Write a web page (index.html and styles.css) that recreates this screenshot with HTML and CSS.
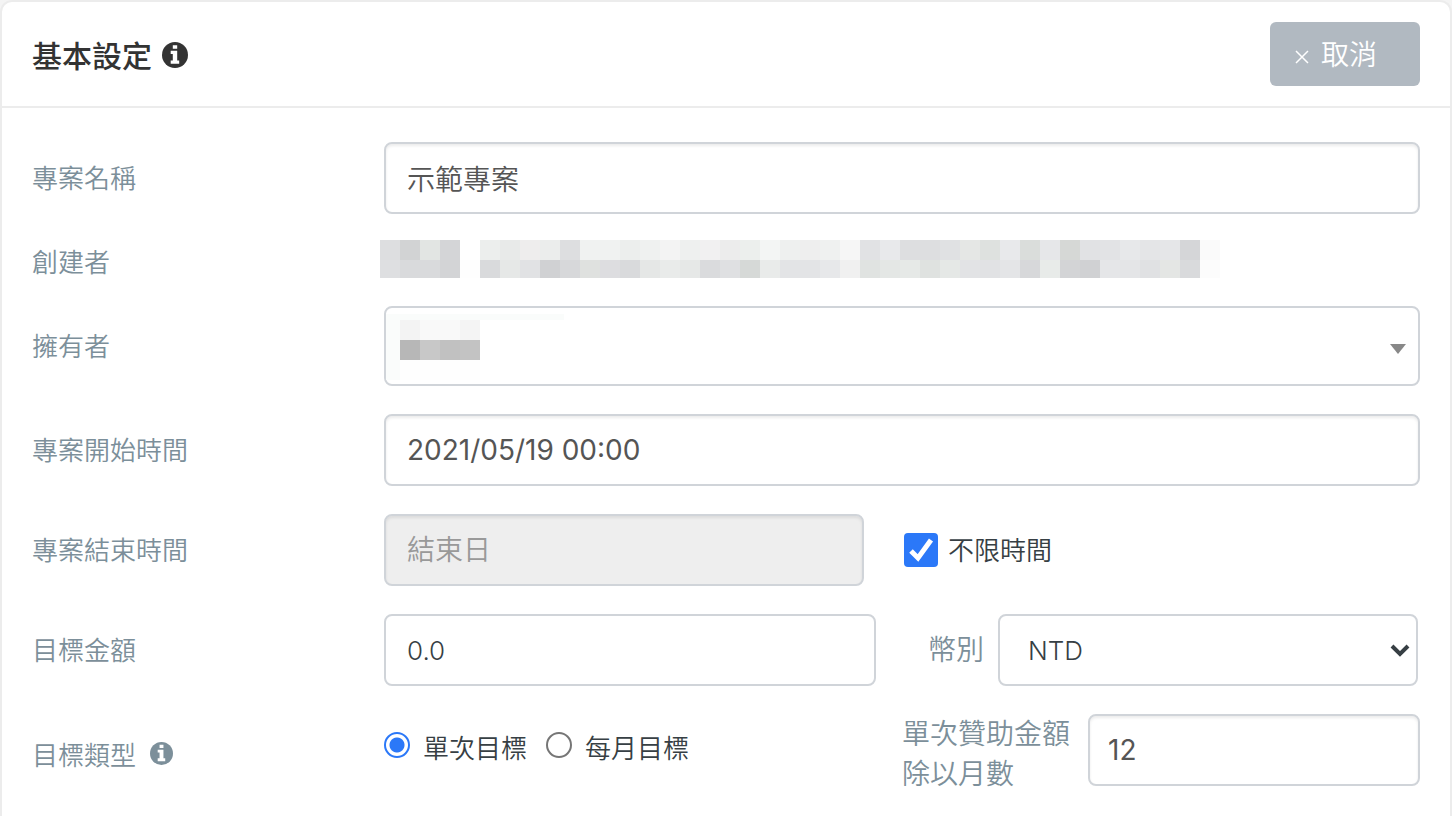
FILE: index.html
```html
<!DOCTYPE html>
<html lang="zh-Hant">
<head>
  <meta charset="UTF-8" />
  <meta name="viewport" content="width=device-width, initial-scale=1.0"/>
  <title>基本設定</title>
  <link rel="stylesheet" href="styles.css">
</head>
<body>

  <form class="panel">

    <!-- Panel heading -->
    <header class="panel-heading">
      <h1><span>基本設定</span>
        <svg class="icon-info" viewBox="0 0 26 26" aria-hidden="true">
          <circle cx="13" cy="13" r="13"/>
          <path fill="#fff" d="M10.8 3.2h4.4v3.6h-4.4zM8.7 8.7h6.5v9.8h2v3.2H8.7v-3.2h2.1v-6.6H8.7z"/>
        </svg>
      </h1>
      <button type="button" class="btn-cancel">
        <svg viewBox="0 0 14 14" aria-hidden="true"><path d="M1 1l12 12M13 1L1 13"/></svg>
        <span>取消</span>
      </button>
    </header>

    <!-- Form rows -->
    <div class="panel-body">
      <div class="row">
        <label for="name">專案名稱</label>
        <input class="field" type="text" id="name" value="示範專案">
      </div>

      <div class="row row-creator">
        <span class="row-label">創建者</span>
        <svg class="mosaic" id="creator" width="840" height="38" aria-hidden="true"></svg>
      </div>

      <div class="row">
        <label for="owner">擁有者</label>
        <div class="owner">
          <select class="field" id="owner"><option value="1" selected></option></select>
          <svg class="owner-mask" id="ownerMask" width="178" height="66" aria-hidden="true"></svg>
        </div>
      </div>

      <div class="row">
        <label for="start">專案開始時間</label>
        <input class="field number" type="text" id="start" value="2021/05/19 00:00">
      </div>

      <div class="row">
        <label for="end">專案結束時間</label>
        <div class="split">
          <input class="field" type="text" id="end" placeholder="結束日" disabled>
          <label class="check"><input type="checkbox" checked><span>不限時間</span></label>
        </div>
      </div>

      <div class="row">
        <label for="amount">目標金額</label>
        <div class="money">
          <input class="field plain" type="text" id="amount" value="0.0">
          <label class="side-label" for="currency">幣別</label>
          <select class="field plain" id="currency"><option>NTD</option></select>
        </div>
      </div>

      <div class="row">
        <span class="row-label label-type"><span>目標類型</span>
          <svg class="icon-info" viewBox="0 0 26 26" aria-hidden="true">
            <circle cx="13" cy="13" r="13"/>
            <path fill="#fff" d="M10.8 3.2h4.4v3.6h-4.4zM8.7 8.7h6.5v9.8h2v3.2H8.7v-3.2h2.1v-6.6H8.7z"/>
          </svg>
        </span>
        <div class="split">
          <div class="radios">
            <label><input type="radio" name="type" checked><span>單次目標</span></label>
            <label><input type="radio" name="type"><span>每月目標</span></label>
          </div>
          <div class="months">
            <label class="side-label" for="months">單次贊助金額除以月數</label>
            <input class="field number" type="text" id="months" value="12">
          </div>
        </div>
      </div>
    </div>

  </form>

  <script>
    // masked personal data, one colour per 20px block
    const creatorRows = [
      "dddee0 d2d3d4 e2e5e3 d4d5d7 fff eceeed e8eae9 eeeded ebedec dddee0 f0f2f1 f0f2f1 eceeed eff1f0 f3f3f3 eef0ef f1f0f1 ececec ecefed f3f5f4 eef0ef eeeeee eff1f0 f6f6f6 e1e2e4 e8e9eb dddee0 dddee0 e0e1e3 e5e7e5 dee1df e8e9eb dadddb e6e7e9 d6d8d6 e1e2e4 e2e3e5 e7e8ea e4e5e7 e5e6e8 d5d6d8 fafafa",
      "dedfe1 d9dadc d9dadc d3d4d6 fefefe d9dadc e6e8e7 e1e2e4 d0d1d3 d7d8da dfe1df dddde0 d9dadc e5e7e6 e9ebea e6e8e7 dadbdd dfe0e2 d6d9d7 e9ebea e3e4e6 e3e4e6 e7e8ea f0f0f0 e0e3e1 e4e7e5 e6e9e7 dfe2e0 e5e8e6 e2e3e5 e1e2e4 e4e5e7 d7d8da e8ebe9 d3d4d6 d0d1d3 e5e6e8 e4e5e7 e0e1e3 e4e6e4 d9dadc fcfcfc"
    ];
    const ownerRows = [
      "f3f3f3 f9f9f9 f9f9f9 f4f4f4",
      "b7b7b7 c8c8c8 c1c1c1 c3c3c3",
      "fefefe fefefe fefefe fefefe"
    ];

    function drawBlocks(id, rows, left, top) {
      let out = "";
      rows.forEach((row, y) => {
        row.split(" ").forEach((color, x) => {
          out += `<rect x="${left + x * 20}" y="${top + y * 20}" width="20" height="20" fill="#${color}"/>`;
        });
      });
      document.getElementById(id).innerHTML += out;
    }

    document.getElementById("ownerMask").innerHTML =
      '<path fill="#fafcfb" d="M0 0h178v6H14v60H0z"/>';
    drawBlocks("creator", creatorRows, 0, 0);
    drawBlocks("ownerMask", ownerRows, 14, 6);
  </script>

</body>
</html>
```

FILE: styles.css
```css
* {
  box-sizing: border-box;
}

body {
  font-family: Inter, "Noto Sans CJK TC", sans-serif;
  font-size: 26px;
  font-weight: 350;
  background-color: #f4f4f4;
  margin: 0;
  color: #373f44;
}

.panel {
  min-height: 100vh;
  background-color: #fff;
  border: 2px solid #ececec;
  border-bottom: 0;
  border-radius: 12px 12px 0 0;
}

.panel-heading {
  display: flex;
  align-items: center;
  justify-content: space-between;
  height: 106px;
  padding: 0 30px;
  border-bottom: 2px solid #ececec;
}

.panel-heading h1 {
  display: flex;
  align-items: center;
  gap: 10px;
  margin: 0;
  padding-top: 2px;
  font-size: 30px;
  font-weight: 500;
  color: #333;
}

/* the CJK glyphs sit low in their line box */
h1 span,
.btn-cancel span,
.check span,
.row > label,
.row-label {
  padding-bottom: 3px;
}

.icon-info {
  width: 26px;
  height: 26px;
  fill: currentColor;
}

.btn-cancel {
  display: flex;
  align-items: center;
  gap: 12px;
  width: 150px;
  height: 64px;
  padding: 0 0 0 25px;
  border: none;
  border-radius: 6px;
  background-color: #b1b9c1;
  color: #fff;
  font: inherit;
  font-size: 28px;
  cursor: pointer;
}

.btn-cancel svg {
  width: 14px;
  height: 14px;
  margin-top: 6px;
  fill: none;
  stroke: #fff;
  stroke-width: 1.5;
}

.panel-body {
  display: flex;
  flex-direction: column;
  gap: 28px;
  padding: 34px 30px 30px;
}

.row {
  display: grid;
  grid-template-columns: 352px 1fr;
  align-items: center;
}

.row > label,
.row-label,
.side-label {
  color: #7c8f9a;
}

.field {
  width: 100%;
  height: 72px;
  padding: 0 21px;
  border: 2px solid #d0d4d9;
  border-radius: 8px;
  background-color: #fff;
  box-shadow: inset 0 2px 3px rgba(0, 0, 0, 0.08);
  color: #555;
  font: inherit;
  font-size: 28px;
}

.field.number {
  font-weight: 400;
}

.field.plain {
  box-shadow: none;
  color: #373f44;
  font-size: 26px;
}

.field:disabled {
  background-color: #eee;
}

.field::placeholder {
  color: #999;
  opacity: 1;
}

select.field {
  appearance: none;
  background-repeat: no-repeat;
}

/* Creator and owner */
.row-creator {
  height: 36px;
}

.row-creator .row-label {
  padding-bottom: 6px;
}

.mosaic {
  align-self: start;
  margin: -2px 0 0 -4px;
}

.owner {
  position: relative;
}

#owner {
  display: block;
  height: 80px;
  box-shadow: none;
  background-image: url("data:image/svg+xml,%3Csvg xmlns='http://www.w3.org/2000/svg' width='16' height='10'%3E%3Cpath fill='%23888' d='M0 0h16L8 10z'/%3E%3C/svg%3E");
  background-position: right 12px top 36px;
}

.owner-mask {
  position: absolute;
  top: 8px;
  left: 2px;
  pointer-events: none;
}

/* Rows with two halves */
.split {
  display: grid;
  grid-template-columns: 480fr 516fr;
  column-gap: 40px;
  align-items: center;
}

.check {
  display: flex;
  align-items: center;
  gap: 10px;
}

.check input {
  appearance: none;
  width: 34px;
  height: 34px;
  margin: 0;
  border-radius: 4px;
  background: #2b78f8 url("data:image/svg+xml,%3Csvg xmlns='http://www.w3.org/2000/svg' width='34' height='34'%3E%3Cpath fill='none' stroke='%23fff' stroke-width='5' d='M7 18l7 7L27 7'/%3E%3C/svg%3E");
}

.money {
  display: grid;
  grid-template-columns: 492fr 122px 420fr;
  align-items: center;
  padding-right: 2px;
}

.money select {
  padding-left: 28px;
  background-image: url("data:image/svg+xml,%3Csvg xmlns='http://www.w3.org/2000/svg' width='20' height='14'%3E%3Cpath fill='none' stroke='%23373f44' stroke-width='4' d='M2 2l8 8 8-8'/%3E%3C/svg%3E");
  background-position: right 6px top 28px;
}

.money .side-label {
  padding-right: 14px;
  text-align: right;
}

.side-label {
  font-size: 28px;
  line-height: 40px;
}

/* Goal type */
.label-type {
  display: flex;
  align-items: center;
  gap: 14px;
  padding-top: 10px;
}

.label-type .icon-info {
  width: 23px;
  height: 23px;
}

.radios {
  display: flex;
  gap: 19px;
}

.radios label {
  display: flex;
  align-items: flex-start;
  gap: 13px;
  padding-bottom: 2px;
  line-height: 34px;
}

.radios input {
  appearance: none;
  width: 26px;
  height: 26px;
  margin: 0;
  border: 2px solid #767676;
  border-radius: 50%;
}

.radios input:checked {
  border-color: #2b78f8;
  background: radial-gradient(circle, #2b78f8 7px, #fff 8px);
}

.months {
  display: grid;
  grid-template-columns: 184px 1fr;
  align-items: center;
}

/* two text lines are taller than the field, keep the row at field height */
.months .side-label {
  width: 170px;
  margin: 0 0 -8px -2px;
}

.months .field {
  padding: 0 18px;
}
```
